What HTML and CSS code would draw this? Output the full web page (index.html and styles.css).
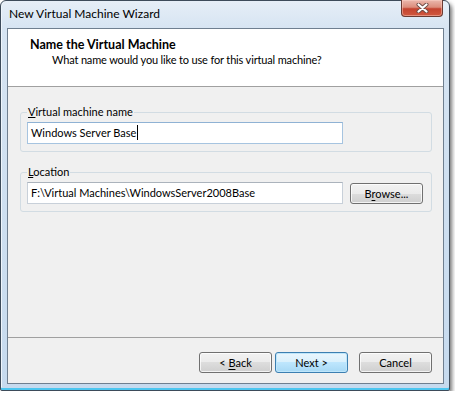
FILE: index.html
```html
<!DOCTYPE html>
<html lang="en">
<head>
    <meta charset="UTF-8">
    <title>New Virtual Machine Wizard</title>
    <link rel="stylesheet" href="styles.css">
</head>
<body>
    <div class="window">
        <div class="titlebar">
            <span class="title">New Virtual Machine Wizard</span>
            <button class="close" aria-label="Close">
                <svg width="13" height="10" viewBox="0 0 13 10">
                    <path d="M2.5 1.5 L10.5 8.5 M10.5 1.5 L2.5 8.5" stroke="#6b4a44" stroke-width="4" stroke-linecap="round"/>
                    <path d="M2.5 1.5 L10.5 8.5 M10.5 1.5 L2.5 8.5" stroke="#ffffff" stroke-width="2.2" stroke-linecap="round"/>
                </svg>
            </button>
        </div>

        <div class="client">
            <div class="header">
                <h1 class="header-title">Name the Virtual Machine</h1>
                <p class="header-text">What name would you like to use for this virtual machine?</p>
            </div>

            <div class="content">
                <fieldset class="group">
                    <legend><u>V</u>irtual machine name</legend>
                    <div class="field focused">Windows Server Base<span class="caret"></span></div>
                </fieldset>

                <fieldset class="group">
                    <legend><u>L</u>ocation</legend>
                    <div class="row">
                        <div class="field">F:\Virtual Machines\WindowsServer2008Base</div>
                        <button class="btn browse">B<u>r</u>owse...</button>
                    </div>
                </fieldset>
            </div>

            <div class="footer">
                <button class="btn">&lt; <u>B</u>ack</button>
                <button class="btn default">Next &gt;</button>
                <button class="btn cancel">Cancel</button>
            </div>
        </div>
    </div>
</body>
</html>
```

FILE: styles.css
```css
* {
    box-sizing: border-box;
}

body {
    margin: 0;
    background: #ffffff;
    font-family: Lato, "Liberation Sans", sans-serif;
    font-size: 11px;
    color: #000000;
}

/* Aero frame */
.window {
    width: 450px;
    height: 391px;
    padding: 0 5px 6px 6px;
    display: flex;
    flex-direction: column;
    border: 1px solid #3d4b5a;
    border-radius: 6px 6px 2px 2px;
    background: linear-gradient(to bottom, #e6eef7 0, #d6e4f2 28px, #c6daee 100%);
    box-shadow:
        inset 0 -2px 0 #4cc6f0,
        inset 1px 0 0 #eef5fc,
        2px 3px 4px rgba(0, 0, 0, 0.55);
}

.titlebar {
    height: 28px;
    margin-top: -1px;
    display: flex;
    justify-content: space-between;
    align-items: flex-start;
}

.title {
    padding: 6px 0 0 2px;
    font-size: 12px;
    line-height: 15px;
}

.close {
    width: 42px;
    height: 17px;
    margin-right: 1px;
    padding: 0;
    display: flex;
    align-items: center;
    justify-content: center;
    border: 1px solid #6a3a32;
    border-top: none;
    border-radius: 0 0 4px 4px;
    background: linear-gradient(to bottom, #ebb8ad 0%, #dc8d7c 45%, #c4432f 55%, #d0583f 100%);
    box-shadow: inset 0 0 0 1px rgba(255, 215, 205, 0.45);
}

/* client area */
.client {
    flex: 1;
    display: flex;
    flex-direction: column;
    border: 1px solid #6f7f90;
    background: #f0f0f0;
}

.header {
    height: 58px;
    padding-top: 8px;
    background: #ffffff;
    border-bottom: 1px solid #a0a0a0;
}

.header-title {
    margin: 0;
    padding-left: 22px;
    font-size: 12.5px;
    font-weight: 700;
    line-height: 15px;
}

.header-text {
    margin: 0;
    padding-left: 44px;
    line-height: 15px;
    letter-spacing: -0.15px;
}

.content {
    flex: 1;
    padding: 17px 11px 0 12px;
}

.group {
    margin: 0 0 12px;
    padding: 2px 6px 7px;
    min-width: 0;
    border: 1px solid #d2dce3;
    border-radius: 3px;
}

.group legend {
    padding: 0 1px;
    line-height: 16px;
}

.row {
    display: flex;
    align-items: center;
    gap: 7px;
}

.field {
    width: 316px;
    height: 22px;
    padding-left: 3px;
    line-height: 20px;
    background: #ffffff;
    border: 1px solid #c8d0d9;
    border-top-color: #abb3bc;
    white-space: nowrap;
}

.field.focused {
    border-color: #a6c4e0;
    border-top-color: #8fb2d4;
}

.caret {
    display: inline-block;
    width: 1px;
    height: 15px;
    margin-left: 1px;
    vertical-align: -3px;
    background: #000000;
}

/* push buttons */
.btn {
    width: 73px;
    height: 21px;
    padding: 0;
    font: inherit;
    color: #000000;
    border: 1px solid #707070;
    border-radius: 3px;
    background: linear-gradient(to bottom, #f2f2f2 0%, #ebebeb 50%, #dddddd 50%, #cfcfcf 100%);
    box-shadow: inset 0 0 0 1px rgba(255, 255, 255, 0.75);
}

.btn.default {
    border-color: #3c7fb1;
    background: linear-gradient(to bottom, #eaf6fd 0%, #d9f0fc 50%, #bee6fd 50%, #a7d9f5 100%);
    box-shadow: inset 0 0 0 1px #bfe6fa;
}

.btn u {
    text-underline-offset: 2px;
}

.footer {
    height: 46px;
    padding: 14px 11px 10px;
    display: flex;
    justify-content: flex-end;
    gap: 3px;
    border-top: 1px solid #a0a0a0;
}

.footer .cancel {
    margin-left: 8px;
}
```
